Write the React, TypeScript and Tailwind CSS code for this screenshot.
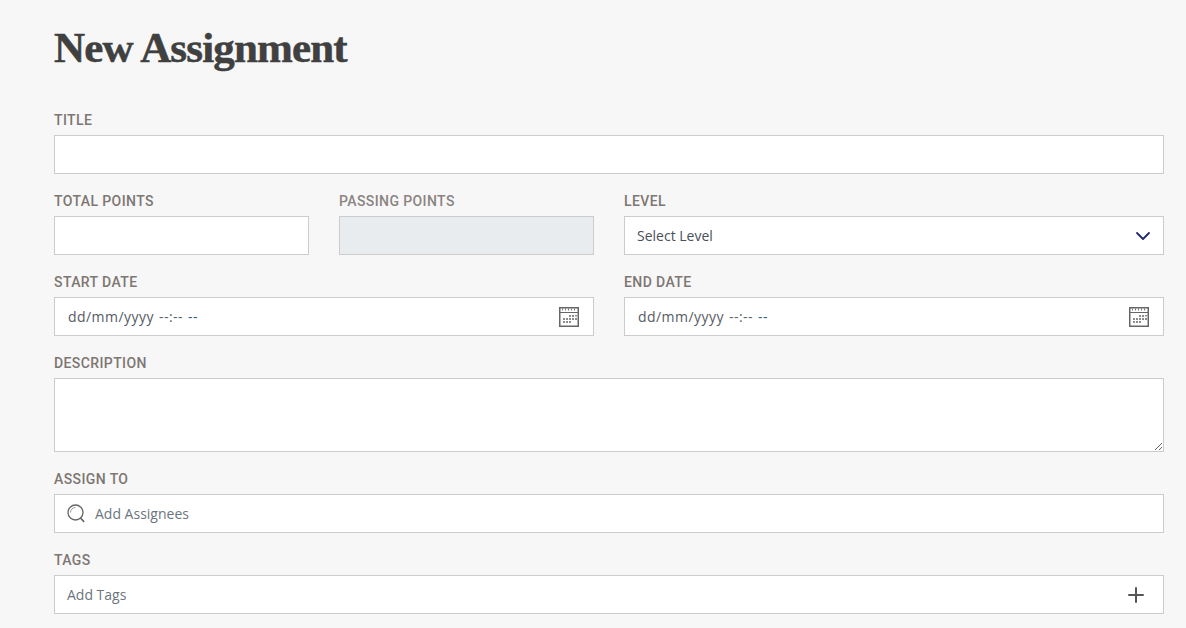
import React from 'react';
import { ChevronDown, Plus } from 'lucide-react';

const labelClass =
  "block h-[20px] mb-[5px] text-[14px] leading-[20px] font-medium tracking-[0.4px] uppercase font-['Roboto',sans-serif]";
const boxClass = 'block w-full h-[39px] border border-[#cccccc] outline-none';

function Label({ children }: { children: React.ReactNode }) {
  return <label className={`${labelClass} text-[#7d7672]`}>{children}</label>;
}

function CalendarIcon() {
  return (
    <svg width="20" height="20" viewBox="0 0 20 20" className="shrink-0">
      <rect x="0.75" y="0.75" width="18.5" height="18.5" fill="#fff" stroke="#666" strokeWidth="1.5" />
      <path d="M1 5.5h18" stroke="#666" strokeWidth="1" />
      <path d="M3.5 1.5v2M6.5 1.5v2M9.5 1.5v2M12.5 1.5v2M15.5 1.5v2" stroke="#777" strokeWidth="1" />
      <path
        d="M10 8h2v2h-2zM13 8h2v2h-2zM16 8h2v1.5h-2zM4 11h2v2H4zM7 11h2v2H7zM10 11h2v2h-2zM13 11h2v2h-2zM16 11h2v2h-2zM4 14h2v2H4zM7 14h2v2H7zM10 14h2v2h-2z"
        fill="#8c8c8c"
      />
    </svg>
  );
}

function DateField({ label }: { label: string }) {
  return (
    <div className="col-span-6">
      <Label>{label}</Label>
      <div className={`${boxClass} bg-white flex items-center justify-between pl-[13px] pr-[14px]`}>
        <span className="text-[14px] text-[#555b63] tracking-[0.45px]">
          dd/mm/yyyy <span className="ml-[1px] text-[#5b6570]">--:--</span>{' '}
          <span className="ml-[1px] text-[#2f5f8a]">--</span>
        </span>
        <CalendarIcon />
      </div>
    </div>
  );
}

export default function App() {
  return (
    <div className="min-h-[628px] bg-[#f7f7f7] pl-[54px] pr-[22px] pt-[22px] overflow-hidden font-['Open_Sans',sans-serif]">
      <h1 className="h-[52px] text-[43px] leading-[52px] font-bold tracking-[-0.85px] text-[#404040] [-webkit-text-stroke:0.5px_#404040] font-['Liberation_Serif',serif]">
        New Assignment
      </h1>

      <form className="mt-[36px] grid grid-cols-12 gap-x-[30px] gap-y-[17px]">
        <div className="col-span-12">
          <Label>Title</Label>
          <input type="text" className={`${boxClass} bg-white`} />
        </div>

        <div className="col-span-3">
          <Label>Total Points</Label>
          <input type="text" className={`${boxClass} bg-white`} />
        </div>
        <div className="col-span-3">
          <label className={`${labelClass} text-[#8a8481]`}>Passing Points</label>
          <input type="text" disabled className={`${boxClass} bg-[#e9ecef]`} />
        </div>
        <div className="col-span-6">
          <Label>Level</Label>
          <div className={`${boxClass} bg-white flex items-center justify-between pl-[12px] pr-[8px]`}>
            <span className="text-[14px] text-[#495057]">Select Level</span>
            <ChevronDown size={24} strokeWidth={1.8} className="text-[#1f2a6b]" />
          </div>
        </div>

        <DateField label="Start Date" />
        <DateField label="End Date" />

        <div className="col-span-12">
          <Label>Description</Label>
          <textarea className="block w-full h-[74px] bg-white border border-[#cccccc] outline-none" />
        </div>

        <div className="col-span-12">
          <Label>Assign To</Label>
          <div className={`${boxClass} bg-white flex items-center pl-[12px]`}>
            <svg width="19" height="19" viewBox="0 0 19 19" fill="none" stroke="#666" className="shrink-0">
              <circle cx="8.5" cy="8.5" r="7.5" strokeWidth="1.3" />
              <path d="M3.5 8.5a5 5 0 0 1 5-5" strokeWidth="1" stroke="#999" />
              <path d="M13.5 14l3.6 3.8" strokeWidth="1.7" />
            </svg>
            <span className="ml-[9px] text-[14px] text-[#6c757d]">Add Assignees</span>
          </div>
        </div>

        <div className="col-span-12">
          <Label>Tags</Label>
          <div className={`${boxClass} bg-white flex items-center justify-between pl-[12px] pr-[15px]`}>
            <span className="text-[14px] text-[#6c757d]">Add Tags</span>
            <Plus size={24} strokeWidth={2} className="text-[#555]" />
          </div>
        </div>
      </form>
    </div>
  );
}
